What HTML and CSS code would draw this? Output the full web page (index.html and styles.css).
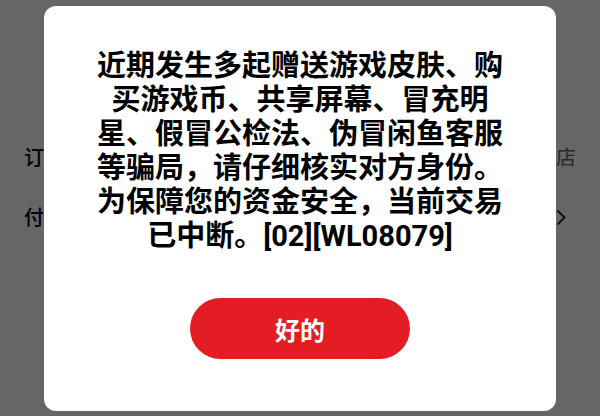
FILE: index.html
```html
<!DOCTYPE html>
<html lang="zh-CN">
<head>
<meta charset="utf-8">
<link rel="stylesheet" href="styles.css">
</head>
<body>
<div class="page">
  <div class="topbar"></div>
  <div class="rows">
    <div class="row row-order">
      <span class="label">订单号</span>
      <span class="value">闲鱼小店</span>
    </div>
    <div class="row row-pay">
      <span class="label">付款方式</span>
      <span class="chev"><svg width="10" height="17" viewBox="0 0 10 17"><path d="M1.5 1.5 L8.5 8.5 L1.5 15.5" fill="none" stroke="#222" stroke-width="1.8"/></svg></span>
    </div>
  </div>
</div>
<div class="overlay">
  <div class="modal">
    <p class="msg">近期发生多起赠送游戏皮肤、购买游戏币、共享屏幕、冒充明星、假冒公检法、伪冒闲鱼客服等骗局，请仔细核实对方身份。为保障您的资金安全，当前交易已中断。[02][WL08079]</p>
    <button class="ok">好的</button>
  </div>
</div>
</body>
</html>
```

FILE: styles.css
```css
html, body {
  margin: 0;
  padding: 0;
}
body {
  width: 600px;
  height: 416px;
  overflow: hidden;
  font-family: "Noto Sans CJK SC", "Noto Sans", sans-serif;
  background: #ffffff;
}
.page {
  width: 600px;
  height: 416px;
  display: flex;
  flex-direction: column;
}
.topbar {
  height: 10px;
  background: #ffffff;
}
.rows {
  padding-top: 136px;
  display: flex;
  flex-direction: column;
  gap: 38px;
}
.row {
  height: 22px;
  display: flex;
  justify-content: space-between;
  align-items: center;
  padding: 0 24px 0 24px;
  font-size: 20px;
  line-height: 22px;
}
.label {
  color: #000;
  font-weight: 500;
}
.value {
  color: #666;
}
.chev {
  display: flex;
  align-items: center;
  padding-right: 10px;
}
.overlay {
  position: absolute;
  left: 0;
  top: 0;
  width: 600px;
  height: 416px;
  background: rgba(0, 0, 0, 0.6);
}
.modal {
  position: absolute;
  left: 44px;
  top: 6px;
  width: 512px;
  height: 405px;
  box-sizing: border-box;
  background: #ffffff;
  border-radius: 12px;
  display: flex;
  flex-direction: column;
  align-items: center;
  padding: 43px 40px 0 40px;
}
.msg {
  margin: 0;
  width: 432px;
  text-align: center;
  font-family: Roboto, "Noto Sans CJK SC", sans-serif;
  font-size: 29px;
  line-height: 34px;
  font-weight: 700;
  color: #000;
}
.ok {
  margin-top: 45px;
  width: 220px;
  height: 61px;
  border: none;
  border-radius: 31px;
  background: #e31d23;
  color: #fff;
  font-family: "Noto Sans CJK SC", "Noto Sans", sans-serif;
  font-size: 25px;
  font-weight: 700;
  padding: 0;
}
```
